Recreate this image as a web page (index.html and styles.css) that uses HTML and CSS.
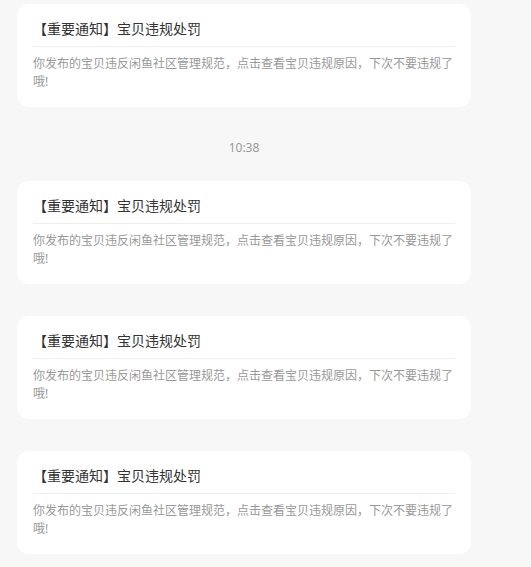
FILE: index.html
```html
<!DOCTYPE html>
<html lang="zh-CN">
<head>
<meta charset="UTF-8" />
<meta name="viewport" content="width=device-width, initial-scale=1" />
<title>系统通知</title>
<link rel="stylesheet" href="styles.css">
</head>
<body>
  <div class="msg-list">
    <div class="notice-card">
      <div class="notice-title">【重要通知】宝贝违规处罚</div>
      <div class="notice-body">你发布的宝贝违反闲鱼社区管理规范，点击查看宝贝违规原因，下次不要违规了哦!</div>
    </div>

    <div class="msg-time">10:38</div>

    <div class="notice-card">
      <div class="notice-title">【重要通知】宝贝违规处罚</div>
      <div class="notice-body">你发布的宝贝违反闲鱼社区管理规范，点击查看宝贝违规原因，下次不要违规了哦!</div>
    </div>

    <div class="notice-card">
      <div class="notice-title">【重要通知】宝贝违规处罚</div>
      <div class="notice-body">你发布的宝贝违反闲鱼社区管理规范，点击查看宝贝违规原因，下次不要违规了哦!</div>
    </div>

    <div class="notice-card">
      <div class="notice-title">【重要通知】宝贝违规处罚</div>
      <div class="notice-body">你发布的宝贝违反闲鱼社区管理规范，点击查看宝贝违规原因，下次不要违规了哦!</div>
    </div>
  </div>
</body>
</html>
```

FILE: styles.css
```css
body {
    margin: 0;
    background-color: #f7f7f7;
    font-family: "Noto Sans", "Noto Sans CJK SC", sans-serif;
}
.msg-list {
    width: 454px;
    margin-left: 17px;
    padding: 4px 0 13px;
    display: flex;
    flex-direction: column;
}
.notice-card {
    background-color: #ffffff;
    border-radius: 12px;
    padding: 15px 16px 16px;
    margin-bottom: 32px;
}
.notice-card:last-child {
    margin-bottom: 0;
}
.notice-title {
    font-size: 14px;
    line-height: 20px;
    color: #333333;
    padding-bottom: 7px;
    border-bottom: 1px solid #eeeeee;
}
.notice-body {
    font-size: 12px;
    line-height: 18px;
    color: #999999;
    padding-top: 8px;
}
/* time divider between messages */
.msg-time {
    margin: -1px 0 23px;
    text-align: center;
    font-size: 12px;
    line-height: 20px;
    color: #999999;
}
```
